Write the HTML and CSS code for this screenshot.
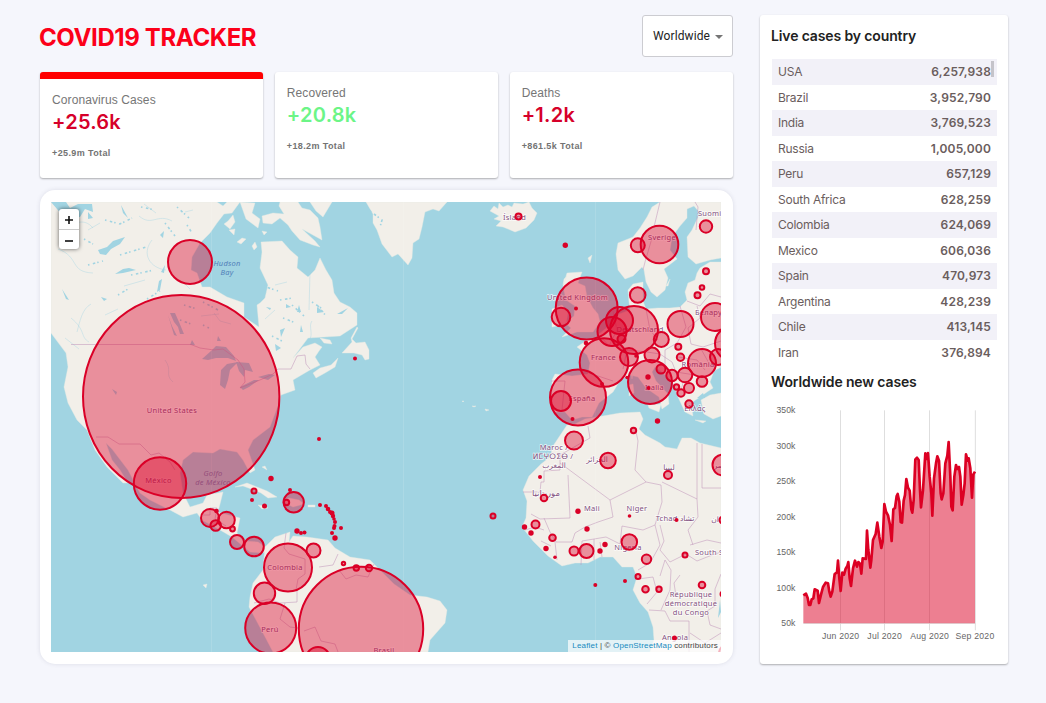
FILE: index.html
```html
<!DOCTYPE html>
<html lang="en">
<head>
<meta charset="utf-8">
<title>COVID19 Tracker</title>
<link rel="stylesheet" href="styles.css">
</head>
<body>
<div class="app">
  <main class="left">
    <header class="header">
      <h1>COVID19 TRACKER</h1>
      <div class="select"><span>Worldwide</span><svg class="caret" viewBox="0 0 8 4"><path d="M0 0h8L4 4z"/></svg></div>
    </header>
    <section class="stats">
      <div class="card stat selected"><p class="label">Coronavirus Cases</p><h2>+25.6k</h2><p class="total">+25.9m Total</p></div>
      <div class="card stat"><p class="label">Recovered</p><h2 class="green">+20.8k</h2><p class="total">+18.2m Total</p></div>
      <div class="card stat"><p class="label">Deaths</p><h2>+1.2k</h2><p class="total">+861.5k Total</p></div>
    </section>
    <section class="map-card">
      <div class="map">
        <svg class="map-svg" viewBox="51 202 670 450">
          <g class="land">
            <path d="M51 202H217L223 206 227 202H240L232 213 224 214 217 223 210 233 200 243 192 257 191 270 197 273 202 287 210 287 227 297 244 303 244 317 253 323 259 327 257 305 260 303 265 298 268 285 260 268 262 252 261 242 282 241 290 250 298 257 297 268 308 277 315 270 320 258 326 270 332 280 334 293 340 302 350 307 357 313 357 325 340 336 308 338 293 358 303 347 315 343 322 347 319 351 315 357 320 365 310 370 293 380 295 390 281 395 279 403 270 427 253 440 248 450 255 470 250 473 243 460 237 452 220 449 213 453 193 452 183 460 180 473 183 493 190 507 203 503 207 495 223 492 219 508 217 512 240 518 237 533 243 541 258 542 270 550 262 553 250 552 232 537 220 530 202 520 197 513 183 517 170 510 150 500 140 493 128 470 112 449 106 443 112 460 120 470 128 483 123 483 107 467 95 450 87 430 77 420 68 403 64 387 68 367 66 353 51 333Z"/>
            <path d="M265 547 275 537 290 532 289 542 293 536 307 537 328 540 335 548 350 557 370 560 380 570 394 584 410 595 427 597 440 601 447 610 445 623 430 640 428 652H273L263 633 249 607 250 597 253 583 263 570Z"/>
            <path d="M280 202H298L302 208 310 210 318 218 320 227 322 240 302 229 315 241 320 247 313 245 300 240 292 231 288 225 280 218 272 224 263 223 262 216 273 213 284 214 279 206Z"/>
            <path d="M310 202H332L323 217 316 211ZM224 224 230 229 235 222 233 215 228 221ZM240 202 255 203 252 213 260 219 258 228 246 219ZM229 230 234 235 235 229ZM237 242 242 238 246 239 241 244ZM252 246 255 242 257 247 254 250ZM262 231 267 232 264 235Z"/>
            <path d="M366 202 373 214 373 223 377 230 382 244 392 257 398 254 408 265 412 258 413 243 419 239 422 227 425 212 433 209 439 211 447 202Z"/>
            <path d="M357 327 351 338 352 342 342 353 354 353 362 355 365 360 369 359 369 350 365 342 356 343 352 339 358 328ZM313 373 316 378 325 373 335 367 338 358 331 365 320 368ZM320 338 330 340 332 344 324 343Z"/>
            <path d="M490 211 494 206 498 209 499 203 503 207 508 205 512 207 514 203 523 204 529 202 532 208 537 213 534 220 526 228 515 232 508 229 503 227 496 226 501 221 494 219 499 216Z"/>
            <path d="M235 487 247 483 257 487 267 491 277 497 268 498 261 493 254 490 243 486ZM283 501 289 498 299 500 304 504 293 507 287 504ZM308 505H315V507H308ZM258 505 265 506 268 508 262 509ZM262 467 265 466 267 470Z"/>
            <path d="M660 202 652 207 647 217 640 228 633 237 618 243 616 254 618 270 625 279 633 276 642 267 644 270 646 282 651 292 657 297 665 290 668 278 664 269 677 259 670 250 672 237 680 226 687 218 687 209 694 206 700 213 692 230 687 237 688 257 696 264 710 260 721 258V202Z"/>
            <path d="M721 262 710 262 700 268 697 273 695 280 688 283 685 292 687 300 680 307 670 308 658 308 646 309 643 301 643 282 633 284 628 290 629 302 630 310 619 314 610 325 599 334 597 338 587 340 577 347 587 355 590 363 588 374 572 376 555 374 552 380 552 391 550 403 555 412 565 412 572 420 582 417 592 417 599 403 613 392 621 379 630 375 638 377 646 388 659 397 662 409 669 404 668 394 656 381 652 372 655 367 662 372 673 383 678 397 685 412 693 416 691 403 700 397 707 392 713 388 710 382 714 371 721 367Z"/>
            <path d="M721 393 710 395 701 400 704 414 713 419 721 416ZM567 273 582 272 578 283 585 286 587 297 593 308 598 314 600 322 593 332 577 332 562 337 571 328 565 323 574 316 575 306 566 300 563 286ZM552 309 562 305 568 313 566 324 552 327ZM629 385 633 384 634 393 629 396ZM631 372 633 371 632 379ZM648 405 661 404 659 412 649 408ZM695 420 706 421 703 423ZM588 258 592 255 590 263ZM564 279 567 276 563 285ZM666 286 670 279 668 286Z"/>
            <path d="M567 425 575 424 585 419 597 417 620 413 640 412 643 419 639 429 645 435 660 443 665 447 677 449 682 438 691 438 700 443 721 448V652H650L654 640 653 627 648 612 640 603 633 590 637 577 633 567 622 567 613 557 600 557 588 563 575 563 562 566 548 556 533 541 522 527 526 518 527 501 523 490 529 476 541 464 550 457 553 446Z"/>
            <path d="M203 585 207 584 206 588ZM462 401 464 401 463 402ZM472 406 476 406 474 407ZM485 409 489 410 486 411Z"/>
          </g>
          <g class="water">
            <path d="M51 202H66L70 208 78 204H92L93 212 85 209 80 217 63 216ZM98 250 107 247 113 241 125 237 120 244 111 249 106 255 100 254ZM115 274 123 269 129 268 136 270 123 273ZM157 292 159 281 162 279 160 290ZM161 272 165 265 164 273ZM160 235 164 231 163 238ZM62 289 69 300 66 299ZM101 297 107 299 104 301ZM88 212 93 218 88 219ZM121 205 128 218 123 213ZM74 226 79 232 78 236Z"/>
            <path d="M170 313 175 313 179 322 184 334 180 334 178 327 174 322ZM168 315 172 326 177 336 174 335ZM202 359 211 351 216 346 226 347 234 356 236 361 228 358 216 358 208 360ZM220 385 221 370 227 364 238 362 230 370 228 380 225 389ZM236 362 249 363 253 372 245 370 244 377 239 371ZM240 387 254 380 259 380 249 387 243 390ZM258 377 269 374 275 375 268 380ZM112 389 117 392 116 395ZM218 336 221 341 217 341ZM192 340 195 345 190 345ZM299 305 301 312 297 312ZM317 307 324 312 317 313ZM280 330 285 328 281 337ZM275 344 281 348 276 351ZM301 325 303 332 300 332ZM271 308 266 307 270 310ZM286 304 291 307 286 308ZM337 314 348 308 342 314ZM697 398 703 393 705 398ZM718 618 720 600 721 612ZM675 257 677 250 679 254Z"/>
          </g>
          <path class="river" d="M58 249C80 257 69 272 93 273M91 304C82 309 80 321 77 332M71 318C86 330 80 337 89 342M65 338 79 349M100 223 88 230M152 240C141 254 150 268 166 270M124 286 145 280M182 281 190 289M214 313 220 321 231 324M165 360C173 371 164 374 173 382M60 225C74 226 83 216 93 228M139 216C152 227 157 213 172 221M144 204 156 213M105 315 118 309M201 316 219 314M185 212 193 210M275 285 287 282M265 319 275 310M310 272 309 310M312 321C308 326 314 334 309 341"/>
          <path class="rough" d="M64 221 70 226M84 239 93 244M105 220 120 224 132 218M141 207 155 210M177 207 189 218M120 255 146 247M131 275 154 270M88 265 103 261M165 223 175 236M187 225 192 233M147 299 160 291M118 295 128 289M180 320 191 324M184 305 197 309M203 325 209 328M203 302 218 310M263 286 278 291M292 305 304 316M283 318 296 323M312 302 324 310M272 336 284 342M318 306 326 316M370 211 382 220 380 227M280 300 293 298"/>
          <path class="border" d="M71 344.500H191L200 348 214 350 223 349 238 360 244 369 245 382 240 388 260 380 273 374 278 369H291L297 356 305 355 306 364 310 369M96 437H108L119 444H140L151 455 159 453 170 462 175 470M203 515H210V508H217L215 519 226 526M286 533 284 548 289 554 305 559 305 574 298 579 296 590M254 603 269 599 280 603 297 602 297 590M285 603 280 619 290 627 298 628M319 567 333 565 338 554M339 570 346 579 356 575 368 577 374 564M304 631 315 627 321 641 335 644 338 652"/>
          <path class="border" d="M654 227 660 202M695 202 698 207 696 230M643 270 645 262 652 238M613 311 617 330 609 346 602 338M623 369 627 350 647 352 660 354M646 309 650 330 658 340M680 306 686 327 677 343 665 350 665 365M687 301 700 306 710 294 721 297M697 306 700 318 688 328 691 344 703 347 721 341M701 349 710 365 721 366M678 357 697 360 705 370M660 354 672 362 676 372 695 375M551 381 565 381 562 410M589 373 613 381M676 373 683 383 681 390"/>
          <path class="border" d="M588 426 590 438 560 455V470L544 471V482H541L540 492H523M560 463 610 500 646 482M568 475 570 518 540 519 531 514M610 500 613 517 598 522 585 527 575 533 572 542 556 542 550 532 544 518M646 482 661 485 662 502 655 525M635 427 638 441 635 470 646 482M662 482 697 499V443M702 444V488H721M697 499 698 517 688 530 693 545M655 525 643 530 622 526 620 544 606 537 582 541 581 565M594 539 594 560M600 542 602 557M655 525 660 545 650 563 638 570M660 525 664 541 660 550 670 562 686 554 697 561 707 557 721 552M690 545 707 540 721 543M638 579 653 577 657 592 647 604M660 576 665 560 671 570 670 590 661 610M649 610 665 611 670 621 689 621V652M721 574 715 589 715 606 707 611 710 625 721 629M680 575 674 583 676 596M525 530 535 527 544 530M541 541 551 546M555 542 557 560M690 633 705 643 721 633"/>
          <path class="seam" d="M211.500 202V652M403.500 202V652M595.500 202V652"/>
          <g class="place">
            <text x="172" y="413">United States</text><text x="158.500" y="483">México</text>
            <text x="285" y="570">Colombia</text><text x="270" y="632">Perú</text><text x="384" y="653">Brasil</text>
            <text x="514.500" y="220">Ísland</text><text x="662" y="240">Sverige</text><text x="577.500" y="300">United Kingdom</text>
            <text x="640" y="332">Deutschland</text><text x="603.500" y="360">France</text><text x="582" y="401">España</text><text x="654.500" y="390">Italia</text>
            <text x="695" y="411">Ελλάς</text><text x="698" y="367">România</text>
            <text x="698" y="216" class="start">Suomi</text><text x="695" y="315" class="start">Беларусь</text>
            <text x="554" y="450">Maroc /</text><text x="553" y="459">ⵍⵎⵖⵔⵉⴱ /</text><text x="554" y="468">المغرب</text>
            <text x="597" y="462">الجزائر</text><text x="546" y="496" class="wide">موريتانيا</text><text x="669" y="470">ليبيا</text><text x="721" y="468">مصر</text>
            <text x="592" y="511">Mali</text><text x="637" y="511">Niger</text><text x="675" y="521">Tchad تشاد</text><text x="715" y="522">ان</text>
            <text x="628" y="550">Nigeria</text><text x="695" y="555" class="start">South Sudan</text>
            <text x="691" y="597">République</text><text x="691" y="606">démocratique</text><text x="691" y="615">du Congo</text><text x="675" y="640">Angola</text>
          </g>
          <g class="sea"><text x="227" y="266">Hudson</text><text x="227" y="275">Bay</text></g>
          <g class="sea gulf"><text x="213" y="476">Golfo</text><text x="213" y="485">de México</text></g>
          <g class="cases">
            <ellipse cx="181.200" cy="396.500" rx="98.200" ry="101.500"/>
            <circle cx="190" cy="262" r="22"/><circle cx="160" cy="483.500" r="26.200"/>
            <circle cx="210" cy="518" r="9"/><circle cx="226.500" cy="520" r="8.300"/><circle cx="215.700" cy="525.500" r="5.300"/><circle cx="232.500" cy="529" r="2.400"/><circle cx="216.500" cy="511" r="1.300"/>
            <circle cx="237" cy="542" r="7"/><circle cx="254" cy="546.500" r="9.800"/>
            <circle cx="288" cy="567.500" r="24"/><circle cx="313.500" cy="550.500" r="7"/><circle cx="264.500" cy="593.300" r="10.700"/><circle cx="270.700" cy="628" r="25.500"/><circle cx="361" cy="629" r="62.200"/><circle cx="318" cy="659" r="12"/>
            <circle cx="356.300" cy="568" r="2.700"/><circle cx="369" cy="568" r="3.200"/><circle cx="343.500" cy="563.500" r="1.700"/>
            <circle cx="293.700" cy="502.300" r="10.200"/><circle cx="286.500" cy="502.500" r="2.700"/><circle cx="254" cy="491" r="2.500"/>
            <circle cx="518.500" cy="216.500" r="3"/><circle cx="659.500" cy="244.500" r="18.800"/><circle cx="637.800" cy="245.300" r="7"/><circle cx="706" cy="226.500" r="6.200"/>
            <circle cx="706" cy="271.300" r="3"/><circle cx="702" cy="287.500" r="2.300"/><circle cx="697.500" cy="295.300" r="3"/><circle cx="637.700" cy="295" r="7.800"/>
            <circle cx="586.700" cy="308.500" r="31"/><circle cx="561" cy="317" r="9.300"/><circle cx="619.500" cy="320.500" r="13.500"/><circle cx="612" cy="331.500" r="14.500"/><circle cx="634" cy="330" r="24"/><circle cx="621.500" cy="339" r="4"/>
            <circle cx="680.500" cy="324" r="13"/><circle cx="715" cy="317" r="14"/><circle cx="661.300" cy="339.500" r="7.500"/><circle cx="678.300" cy="346.700" r="3"/><circle cx="680.500" cy="357.300" r="3.700"/><circle cx="732" cy="343.500" r="17"/>
            <circle cx="604" cy="362.500" r="24.300"/><circle cx="629" cy="357" r="9"/><circle cx="652" cy="355" r="7.500"/><circle cx="650" cy="382" r="22"/><circle cx="578" cy="397.500" r="28"/><circle cx="561" cy="401" r="10"/>
            <circle cx="702" cy="363" r="14"/><circle cx="718" cy="357" r="8"/><circle cx="661" cy="369" r="4.500"/><circle cx="672" cy="375.500" r="5.700"/><circle cx="685" cy="375" r="7.300"/><circle cx="702" cy="381.500" r="5.300"/><circle cx="689" cy="388" r="5"/><circle cx="681" cy="393" r="3.700"/><circle cx="676.500" cy="387" r="2.700"/><circle cx="689" cy="404" r="3.700"/>
            <circle cx="574" cy="440.500" r="9"/><circle cx="608" cy="460.500" r="7.800"/><circle cx="633.500" cy="430.500" r="2.700"/><circle cx="668" cy="475" r="4"/><circle cx="723" cy="465" r="10.500"/>
            <circle cx="544" cy="498" r="3.300"/><circle cx="535.500" cy="524.500" r="4"/><circle cx="552.500" cy="537.700" r="3.300"/><circle cx="574" cy="551" r="4.500"/><circle cx="586.500" cy="551" r="7"/><circle cx="629.300" cy="542" r="7.800"/><circle cx="646.500" cy="559.300" r="4.700"/>
            <circle cx="638" cy="576.500" r="2.500"/><circle cx="645.500" cy="589.300" r="3.300"/><circle cx="659" cy="589.300" r="2.700"/><circle cx="702" cy="585" r="3.300"/><circle cx="685" cy="555" r="2.500"/><circle cx="493" cy="516" r="2.500"/><circle cx="723" cy="520" r="3.500"/><circle cx="723" cy="594" r="2.500"/><circle cx="727" cy="653" r="8"/>
          </g>
          <g class="dots">
            <circle cx="355" cy="358.500" r="2"/><circle cx="319" cy="439" r="2"/><circle cx="271" cy="478.500" r="2.700"/><circle cx="290" cy="490" r="2"/><circle cx="252" cy="500" r="2"/><circle cx="264.500" cy="506" r="2.500"/><circle cx="320" cy="505" r="2"/><circle cx="326" cy="506" r="2"/><circle cx="328" cy="509" r="2.300"/><circle cx="330" cy="512" r="2"/><circle cx="332" cy="513" r="2.500"/><circle cx="333" cy="516" r="2.200"/><circle cx="334" cy="519" r="1.800"/><circle cx="335" cy="522" r="2"/><circle cx="334.500" cy="526" r="2"/><circle cx="334" cy="528" r="2"/><circle cx="341" cy="528" r="2"/><circle cx="332" cy="533" r="2"/><circle cx="335" cy="538" r="2.700"/><circle cx="297" cy="531" r="2.700"/><circle cx="301" cy="533" r="2"/><circle cx="304.500" cy="532.500" r="2"/>
            <circle cx="565.300" cy="245.300" r="2.700"/><circle cx="576" cy="308.500" r="2"/><circle cx="586" cy="343" r="2.300"/><circle cx="572.500" cy="419" r="2"/><circle cx="602" cy="384" r="2"/><circle cx="648" cy="377" r="2.700"/><circle cx="648.500" cy="388" r="2"/><circle cx="627" cy="377.500" r="1.700"/><circle cx="636" cy="356" r="1.800"/><circle cx="657.500" cy="421" r="2.700"/>
            <circle cx="540" cy="477" r="2"/><circle cx="578" cy="511.300" r="2.700"/><circle cx="629.500" cy="516" r="1.800"/><circle cx="587" cy="529" r="2.700"/><circle cx="524.500" cy="527" r="2.700"/><circle cx="531" cy="533" r="2.700"/><circle cx="546" cy="548.500" r="2.700"/><circle cx="555" cy="557.300" r="1.800"/><circle cx="605" cy="544.500" r="2.700"/><circle cx="600" cy="551" r="2.700"/><circle cx="595.300" cy="585" r="2"/><circle cx="625" cy="581" r="2"/><circle cx="676.500" cy="520" r="2"/><circle cx="674.500" cy="638" r="2.500"/>
          </g>
        </svg>
        <div class="zoom"><span><svg viewBox="0 0 8 8"><path d="M4 0v8M0 4h8"/></svg></span><span><svg viewBox="0 0 8 8"><path d="M0 4h8"/></svg></span></div>
        <div class="attribution"><a>Leaflet</a> | © <a>OpenStreetMap</a> contributors</div>
      </div>
    </section>
  </main>
  <aside class="card side">
    <h3>Live cases by country</h3>
    <div class="table">
      <div class="row"><span>USA</span><strong>6,257,938</strong></div>
      <div class="row"><span>Brazil</span><strong>3,952,790</strong></div>
      <div class="row"><span>India</span><strong>3,769,523</strong></div>
      <div class="row"><span>Russia</span><strong>1,005,000</strong></div>
      <div class="row"><span>Peru</span><strong>657,129</strong></div>
      <div class="row"><span>South Africa</span><strong>628,259</strong></div>
      <div class="row"><span>Colombia</span><strong>624,069</strong></div>
      <div class="row"><span>Mexico</span><strong>606,036</strong></div>
      <div class="row"><span>Spain</span><strong>470,973</strong></div>
      <div class="row"><span>Argentina</span><strong>428,239</strong></div>
      <div class="row"><span>Chile</span><strong>413,145</strong></div>
      <div class="row"><span>Iran</span><strong>376,894</strong></div>
      <i class="scrollbar"></i>
    </div>
    <h3 class="second">Worldwide new cases</h3>
    <svg class="chart" viewBox="30 105 744 765">
      <path class="grid" d="M271.500 151V811M403.500 151V811M538.500 151V811M676 151V811M160 790H676"/>
      <path class="area" d="M160 706 168 701 173 714 177 735 181 735 185 718 190 715 194 688 203 692 207 729 213 704 219 681 227 668 234 670 238 695 242 710 247 695 254 642 261 637 264 602 268 655 272 693 277 638 282 644 287 626 292 618 295 606 299 655 303 678 309 625 315 602 321 620 325 606 330 611 334 641 338 595 348 597 351 512 355 570 361 623 364 600 369 540 377 522 382 488 388 530 394 564 398 545 403 432 408 455 414 466 420 495 425 543 430 448 435 444 440 408 443 402 448 425 452 486 456 488 461 422 465 405 469 357 474 383 479 392 484 448 487 458 491 420 496 298 501 293 506 300 510 390 513 442 519 390 526 280 530 297 534 279 539 350 544 400 547 467 552 355 558 310 562 289 567 302 572 400 575 418 580 400 586 310 592 287 596 246 601 350 604 440 608 451 613 350 618 315 622 327 627 321 631 350 635 434 640 405 644 370 648 283 653 302 656 295 661 325 666 413 670 343 675 335V790H160Z"/>
      <path class="line" d="M160 706 168 701 173 714 177 735 181 735 185 718 190 715 194 688 203 692 207 729 213 704 219 681 227 668 234 670 238 695 242 710 247 695 254 642 261 637 264 602 268 655 272 693 277 638 282 644 287 626 292 618 295 606 299 655 303 678 309 625 315 602 321 620 325 606 330 611 334 641 338 595 348 597 351 512 355 570 361 623 364 600 369 540 377 522 382 488 388 530 394 564 398 545 403 432 408 455 414 466 420 495 425 543 430 448 435 444 440 408 443 402 448 425 452 486 456 488 461 422 465 405 469 357 474 383 479 392 484 448 487 458 491 420 496 298 501 293 506 300 510 390 513 442 519 390 526 280 530 297 534 279 539 350 544 400 547 467 552 355 558 310 562 289 567 302 572 400 575 418 580 400 586 310 592 287 596 246 601 350 604 440 608 451 613 350 618 315 622 327 627 321 631 350 635 434 640 405 644 370 648 283 653 302 656 295 661 325 666 413 670 343 675 335"/>
      <g class="ylabels"><text x="136" y="160">350k</text><text x="136" y="267">300k</text><text x="136" y="373">250k</text><text x="136" y="479">200k</text><text x="136" y="586">150k</text><text x="136" y="692">100k</text><text x="136" y="798">50k</text></g>
      <g class="xlabels"><text x="272" y="837">Jun 2020</text><text x="404" y="837">Jul 2020</text><text x="539" y="837">Aug 2020</text><text x="675" y="837">Sep 2020</text></g>
    </svg>
  </aside>
</div>
</body>
</html>
```
FILE: styles.css
```css
* { box-sizing: border-box; }
body { margin: 0; background: #f5f6fc; font-family: Inter, "Liberation Sans", sans-serif; }
h1, h2, h3, p { margin: 0; }
.app { display: flex; justify-content: space-between; width: 1046px; height: 703px; padding: 15px 38px 39px 40px; }
.left { display: flex; flex-direction: column; width: 693px; }
.header { display: flex; justify-content: space-between; align-items: center; height: 42px; margin-bottom: 15px; }
.header h1 { color: #fc0019; font-size: 24px; font-weight: 700; line-height: 30px; letter-spacing: -0.38px; padding-top: 3px; margin-left: -1px; }
.select { display: flex; align-items: center; justify-content: space-between; width: 91px; height: 42px; padding: 0 9px 0 10px; background: #fff; border: 1px solid #ccccd1; border-radius: 3px; color: #222; font: 12px Roboto, sans-serif; letter-spacing: 0.1px; }
.caret { width: 8px; height: 4px; fill: #757575; margin-top: 1px; }
.stats { display: flex; gap: 11.500px; height: 106px; margin-bottom: 12px; }
.card { background: #fff; border-radius: 3px; box-shadow: 0 1px 2px rgba(0,0,0,.3); }
.stat { flex: 1; padding: 13px 12px; }
.selected { border-top: 7px solid #ff0000; }
.stat .label { color: #767676; font: 12px/16px "Liberation Sans", sans-serif; letter-spacing: 0.1px; }
.stat h2 { color: #d6002a; font-size: 20px; font-weight: 600; line-height: 24px; margin-top: 2px; letter-spacing: 0.25px; }
.stat h2.green { color: #6cf587; }
.total { color: #737373; font: bold 9px/12px "Liberation Sans", sans-serif; letter-spacing: 0.38px; margin-top: 13px; }
.map-card { height: 474px; padding: 12px 12px 12px 11px; background: #fff; border-radius: 15px; box-shadow: 0 0 4px rgba(90,90,120,.16); }
.map { position: relative; width: 670px; height: 450px; overflow: hidden; background: #a1d4e2; }
.map-svg { display: block; width: 670px; height: 450px; }
.land { fill: #f2efe9; stroke: #e7eae4; stroke-width: .4; }
.water { fill: #a1d4e2; }
.river { fill: none; stroke: #a1d4e2; stroke-width: .4; }
.rough { fill: none; stroke: #a1d4e2; stroke-width: 1.600; stroke-dasharray: 1.500 3.500 2.500 2; }
.border { fill: none; stroke: #bd91b7; stroke-width: .6; opacity: .85; }
.seam { stroke: #fff; stroke-width: .6; opacity: .2; }
.place, .sea { font: 7.500px "Noto Sans", "DejaVu Sans", sans-serif; letter-spacing: .25px; text-anchor: middle; fill: #835080; stroke: rgba(255,255,255,.75); stroke-width: 1.500px; paint-order: stroke; }
.place .start { text-anchor: start; }
.place .wide { font-size: 8.500px; }
.sea { fill: #5180b9; font-style: italic; stroke-width: 0; }
.gulf { fill: #6483b2; }
.cases { fill: rgba(220,0,40,.4); stroke: #da0027; stroke-width: 2; }
.dots { fill: #da0027; }
.zoom { position: absolute; left: 8px; top: 7px; width: 20px; height: 40px; border-radius: 3px; background: #fff; box-shadow: 0 0 4px rgba(0,0,0,.6); }
.zoom span { display: flex; align-items: center; justify-content: center; height: 20px; padding-top: 2px; }
.zoom span + span { border-top: 1px solid #ccc; }
.zoom svg { width: 8px; height: 8px; stroke: #111; stroke-width: 1.600; }
.attribution { position: absolute; right: 0; bottom: 0; height: 12px; padding: 0 3px 0 4px; background: rgba(255,255,255,.7); color: #444; font: 8px/12px "Liberation Sans", sans-serif; letter-spacing: .17px; }
.attribution a { color: #168ac0; }
.side { width: 248px; height: 649px; padding: 12px 11px; }
.side h3 { color: #222; font-size: 14px; font-weight: 600; line-height: 18px; letter-spacing: -.13px; }
.table { position: relative; height: 306px; margin-top: 14px; margin-left: 1px; color: #6a5d5d; font-size: 12px; }
.row { display: flex; justify-content: space-between; align-items: center; height: 25.500px; padding: 0 6px; }
.row:nth-child(odd) { background: #f2f1f8; }
.row strong { font-weight: 600; letter-spacing: .16px; }
.row span { letter-spacing: -.25px; }
.scrollbar { position: absolute; right: 3px; top: 2px; width: 3px; height: 16px; background: #c5c4ca; }
.side .second { margin-top: 8px; }
.chart { display: block; width: 248px; height: 255px; margin: 4px -11px 0; }
.grid { stroke: #dedede; stroke-width: 3; fill: none; }
.area { fill: rgba(220,0,35,.5); }
.line { fill: none; stroke: #dc0023; stroke-width: 8; stroke-linejoin: round; }
.ylabels, .xlabels { fill: #666; font: 26px "Liberation Sans", sans-serif; text-anchor: end; }
.xlabels { text-anchor: middle; letter-spacing: .7px; }
```
